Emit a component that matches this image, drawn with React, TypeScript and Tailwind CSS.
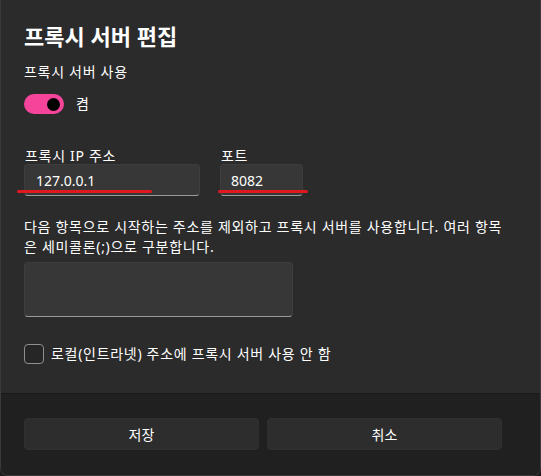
import React from "react";

const font = {
  fontFamily: '"Noto Sans", "Noto Sans CJK KR", sans-serif',
};

export default function App() {
  return (
    <div className="w-[541px] h-[476px] bg-[#1c1c1c]" style={font}>
      <div className="w-full h-full flex flex-col rounded-b-[8px] overflow-hidden border-x border-b border-[#3a3a3a] text-white">
        {/* content */}
        <div className="flex-1 bg-[#2b2b2b] px-[23px] pt-[22px] flex flex-col tracking-[0.7px]">
          <div className="text-[22px] leading-[28px] font-semibold tracking-normal">프록시 서버 편집</div>
          <div className="mt-[12px] text-[14px] leading-[20px]">프록시 서버 사용</div>
          <div className="mt-3 flex items-center h-5">
            <div className="w-10 h-5 rounded-full bg-[#f7449b] flex items-center justify-end pr-[4px]">
              <div className="w-[13px] h-[13px] rounded-full bg-black" />
            </div>
            <span className="ml-3 text-[14px] leading-[20px]">켬</span>
          </div>

          <div className="relative mt-[34px] flex gap-5">
            <div className="flex flex-col">
              <div className="text-[14px] leading-[16px] pl-px">프록시 IP 주소</div>
              <div className="w-[176px] h-8 rounded-[4px] bg-[#373737] border border-[#3d3d3d] border-b-[#9a9a9a] flex items-center px-[11px] text-[14px] tracking-normal">
                127.0.0.1
              </div>
            </div>
            <div className="flex flex-col">
              <div className="text-[14px] leading-[16px] pl-px">포트</div>
              <div className="w-[83px] h-8 rounded-[4px] bg-[#373737] border border-[#3d3d3d] border-b-[#9a9a9a] flex items-center px-[10px] text-[14px] tracking-normal">
                8082
              </div>
            </div>
            <div className="absolute left-[-7px] top-[42px] w-[135px] h-[3px] rounded-full bg-[#e0181f]" />
            <div className="absolute left-[194px] top-[42px] w-[90px] h-[3px] rounded-full bg-[#e0181f]" />
          </div>

          <p className="mt-[21px] w-[482px] text-[14px] leading-[20px]">
            다음 항목으로 시작하는 주소를 제외하고 프록시 서버를 사용합니다. 여러 항목은 세미콜론(;)으로 구분합니다.
          </p>
          <div className="mt-[5px] w-[269px] h-[55px] rounded-[4px] bg-[#373737] border border-[#3d3d3d] border-b-[#9a9a9a]" />

          <div className="mt-[27px] flex items-center">
            <div className="w-5 h-5 rounded-[4px] border border-[#8f8f8f] bg-[#262626]" />
            <span className="ml-[7px] text-[14px] leading-[20px]">로컬(인트라넷) 주소에 프록시 서버 사용 안 함</span>
          </div>
        </div>

        {/* footer */}
        <div className="h-[82px] shrink-0 bg-[#202020] border-t border-[#1a1a1a] px-[23px] pt-[24px] flex gap-2">
          <button className="w-[235px] h-8 rounded-[4px] bg-[#2d2d2d] border border-[#303030] text-[14px] text-white">
            저장
          </button>
          <button className="w-[235px] h-8 rounded-[4px] bg-[#2d2d2d] border border-[#303030] text-[14px] text-white">
            취소
          </button>
        </div>
      </div>
    </div>
  );
}
